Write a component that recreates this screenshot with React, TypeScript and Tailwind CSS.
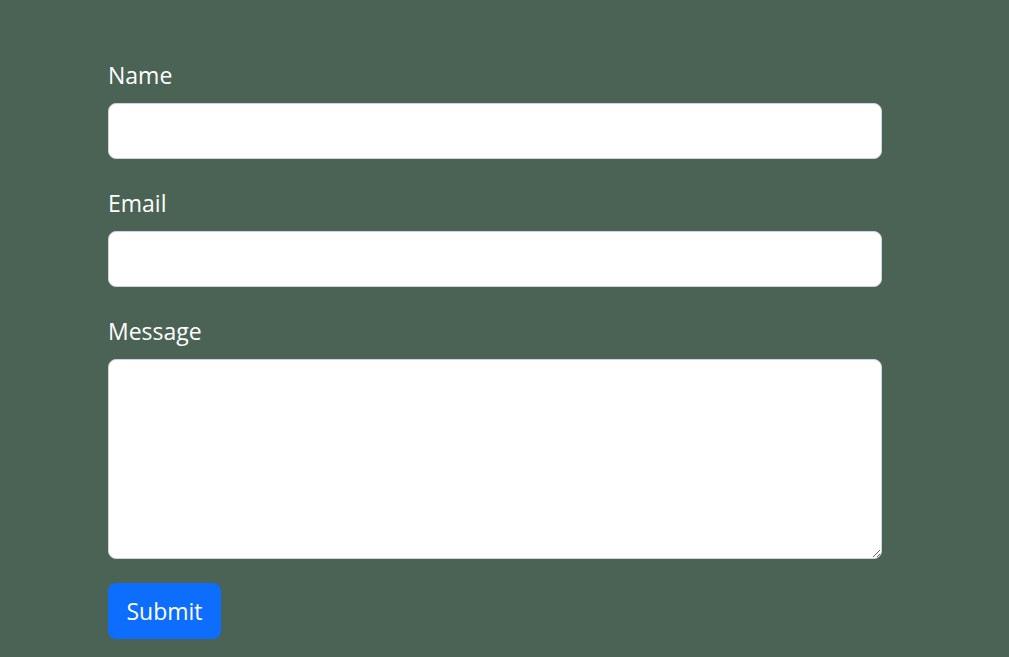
export default function App() {
  return (
    <div
      className="min-h-screen w-full bg-[#4a6355] pt-[60px]"
      style={{ fontFamily: '"Open Sans", "Noto Sans", sans-serif' }}
    >
      <form className="ml-[108px] w-[774px] flex flex-col" onSubmit={(e) => e.preventDefault()}>
        <label htmlFor="name" className="block text-[23px] leading-[30px] text-white mb-[13px]">
          Name
        </label>
        <input
          id="name"
          type="text"
          className="block w-full h-[56px] rounded-lg border border-[#ced4da] bg-white px-4 text-[20px] outline-none mb-[29px]"
        />

        <label htmlFor="email" className="block text-[23px] leading-[30px] text-white mb-[13px]">
          Email
        </label>
        <input
          id="email"
          type="email"
          className="block w-full h-[56px] rounded-lg border border-[#ced4da] bg-white px-4 text-[20px] outline-none mb-[29px]"
        />

        <label htmlFor="message" className="block text-[23px] leading-[30px] text-white mb-[13px]">
          Message
        </label>
        <textarea
          id="message"
          className="block w-full h-[200px] rounded-lg border border-[#ced4da] bg-white px-4 py-2 text-[20px] outline-none resize-y mb-[24px]"
        />

        <div>
          <button
            type="submit"
            className="h-[56px] w-[113px] rounded-lg bg-[#0d6efd] text-white text-[23px] leading-[30px]"
          >
            Submit
          </button>
        </div>
      </form>
    </div>
  );
}
